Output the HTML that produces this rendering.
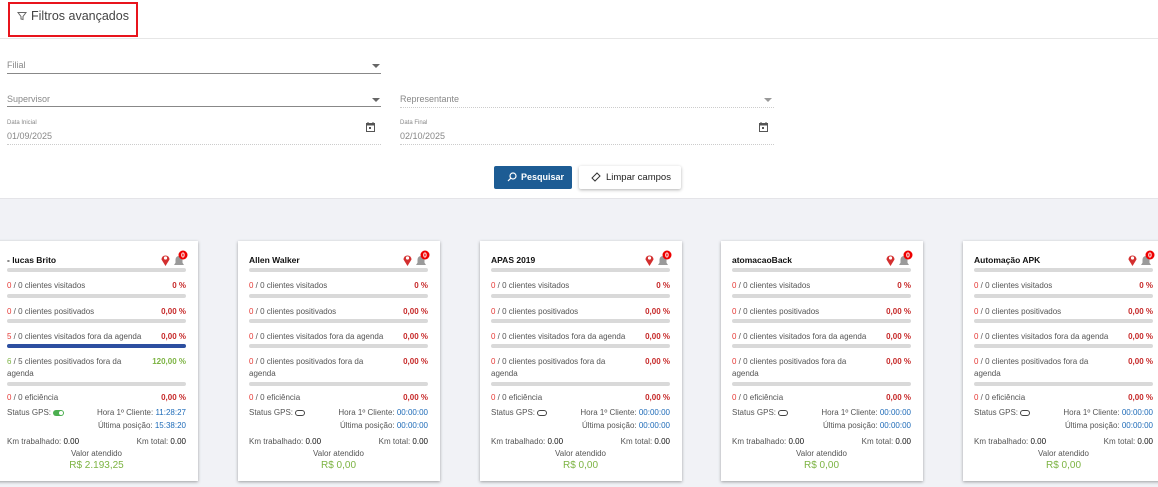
<!DOCTYPE html>
<html><head><meta charset="utf-8"><style>
*{margin:0;padding:0;box-sizing:border-box}
body{width:1158px;height:487px;overflow:hidden;background:#fff;font-family:"Liberation Sans",sans-serif;position:relative;color:#555}
.a{position:absolute}
.hdr{left:8px;top:2px;width:130px;height:35px;border:2px solid #e8141c}
.hline{left:0;top:38px;width:1158px;height:1px;background:#e6e6e6}
.lbl{font-size:9px;color:#888}
.ul{height:1px;background:#888}
.dl{height:0;border-top:1px dotted #ccc}
.tri{width:0;height:0;border-left:4px solid transparent;border-right:4px solid transparent;border-top:4px solid #666}
.gray{left:0;top:198px;width:1158px;height:289px;background:#f1f2f6;border-top:1px solid #e4e4e8}
.card{position:absolute;top:241px;width:202px;height:240px;background:#fff;box-shadow:0 1px 3px rgba(0,0,0,.35);font-size:8px;color:#555}
.card .t{position:absolute;left:11px;top:14px;font-weight:bold;font-size:8.5px;color:#111}
.bar{position:absolute;left:11px;width:179px;height:4px;background:#d9d9d9;border-radius:2px}
.r{position:absolute;left:11px;width:179px}
.r .p{position:absolute;right:0;top:0;color:#c62828;font-weight:bold}
.red{color:#e53935}.grn{color:#7cb342}.blu{color:#1e6bb8}
.ic{position:absolute;left:164px;top:9px}
</style></head><body>
<div class="a hdr"></div>
<svg class="a" style="left:17px;top:11px" width="10" height="10" viewBox="0 0 10 10"><path d="M1 1.5h8L6 5.5v3L4 8V5.5z" fill="none" stroke="#666" stroke-width="1"/></svg>
<div class="a" style="left:31px;top:9px;font-size:12.5px;color:#444">Filtros avançados</div>
<div class="a hline"></div>

<div class="a lbl" style="left:7px;top:60px">Filial</div>
<div class="a tri" style="left:372px;top:64px"></div>
<div class="a ul" style="left:7px;top:73px;width:374px"></div>

<div class="a lbl" style="left:7px;top:94px">Supervisor</div>
<div class="a tri" style="left:372px;top:98px"></div>
<div class="a ul" style="left:7px;top:106px;width:374px"></div>

<div class="a lbl" style="left:400px;top:94px">Representante</div>
<div class="a tri" style="left:764px;top:98px;border-top-color:#999"></div>
<div class="a dl" style="left:400px;top:107px;width:374px"></div>

<div class="a" style="left:7px;top:120px;font-size:6px;color:#888">Data Inicial</div>
<div class="a lbl" style="left:7px;top:131px">01/09/2025</div>
<div class="a dl" style="left:7px;top:144px;width:374px"></div>
<div class="a" style="left:400px;top:120px;font-size:6px;color:#888">Data Final</div>
<div class="a lbl" style="left:400px;top:131px">02/10/2025</div>
<div class="a dl" style="left:400px;top:144px;width:374px"></div>
<svg class="a" style="left:366px;top:122px" width="9" height="10" viewBox="0 0 9 10"><rect x="0.5" y="1.5" width="8" height="8" fill="none" stroke="#555"/><rect x="0.5" y="1.5" width="8" height="2" fill="#555"/><rect x="3" y="5" width="2" height="2" fill="#555"/><path d="M2 0v2M7 0v2" stroke="#555"/></svg>
<svg class="a" style="left:759px;top:122px" width="9" height="10" viewBox="0 0 9 10"><rect x="0.5" y="1.5" width="8" height="8" fill="none" stroke="#555"/><rect x="0.5" y="1.5" width="8" height="2" fill="#555"/><rect x="3" y="5" width="2" height="2" fill="#555"/><path d="M2 0v2M7 0v2" stroke="#555"/></svg>

<div class="a" style="left:494px;top:166px;width:78px;height:23px;background:#1d5c94;border-radius:2px;color:#fff;font-size:9px;font-weight:bold;line-height:23px;padding-left:27px">Pesquisar</div>
<svg class="a" style="left:507px;top:172px" width="10" height="10" viewBox="0 0 10 10"><circle cx="6" cy="4" r="3" fill="none" stroke="#fff" stroke-width="1.2"/><path d="M4 6L1 9" stroke="#fff" stroke-width="1.2"/></svg>
<div class="a" style="left:579px;top:166px;width:102px;height:23px;background:#fff;border-radius:2px;box-shadow:0 1px 3px rgba(0,0,0,.3);color:#222;font-size:9.5px;line-height:23px;padding-left:27px">Limpar campos</div>
<svg class="a" style="left:591px;top:172px" width="10" height="10" viewBox="0 0 10 10"><path d="M6 1L9 4 4 9 1 6z" fill="none" stroke="#333"/></svg>

<div class="a gray"></div>

<div class="card" style="left:-4px">
<div class="t">- lucas Brito</div>
<svg class="ic" width="28" height="18" viewBox="0 0 28 18"><path d="M5.5 16L1.5 9.5A4 4 0 1 1 9.5 9.5z" fill="#d32f2f"/><circle cx="5.5" cy="8" r="1.6" fill="#fff"/><path d="M14 15h10l-1.5-2.2V9.5a3.5 3.5 0 0 0-7 0v3.3z" fill="#9a9a9a"/><circle cx="23" cy="5" r="4.5" fill="#e00"/><text x="23" y="7.3" font-size="7" fill="#fff" text-anchor="middle" font-weight="bold" font-family="Liberation Sans">0</text></svg>
<div class="bar" style="top:27px"></div>
<div class="r" style="top:40px"><span class="red">0</span> / 0 clientes visitados<span class="p">0 %</span></div>
<div class="bar" style="top:53px"></div>
<div class="r" style="top:66px"><span class="red">0</span> / 0 clientes positivados<span class="p">0,00 %</span></div>
<div class="bar" style="top:78px"></div>
<div class="r" style="top:91px"><span class="red">5</span> / 0 clientes visitados fora da agenda<span class="p">0,00 %</span></div>
<div class="bar" style="top:103px;background:#2d4fa0"></div>
<div class="r" style="top:115px;line-height:12px"><span class="grn">6</span> / 5 clientes positivados fora da<br>agenda<span class="p" style="color:#7cb342">120,00 %</span></div>
<div class="bar" style="top:141px"></div>
<div class="r" style="top:152px"><span class="red">0</span> / 0 eficiência<span class="p">0,00 %</span></div>
<div class="r" style="top:167px">Status GPS: <span style="display:inline-block;width:11px;height:6px;background:#4caf50;border-radius:3px;vertical-align:middle;position:relative"><span style="position:absolute;right:1px;top:1px;width:4px;height:4px;background:#fff;border-radius:2px"></span></span><span style="position:absolute;right:0">Hora 1º Cliente: <span class="blu">11:28:27</span></span></div>
<div class="r" style="top:180px"><span style="position:absolute;right:0">Última posição: <span class="blu">15:38:20</span></span></div>
<div class="r" style="top:196px">Km trabalhado: <span style="color:#111">0.00</span><span style="position:absolute;right:0">Km total: <span style="color:#111">0.00</span></span></div>
<div class="r" style="top:208px;text-align:center">Valor atendido</div>
<div class="r" style="top:219px;text-align:center;font-size:10px"><span class="grn">R$ 2.193,25</span></div>
</div>

<div class="card" style="left:238px">
<div class="t">Allen Walker</div>
<svg class="ic" width="28" height="18" viewBox="0 0 28 18"><path d="M5.5 16L1.5 9.5A4 4 0 1 1 9.5 9.5z" fill="#d32f2f"/><circle cx="5.5" cy="8" r="1.6" fill="#fff"/><path d="M14 15h10l-1.5-2.2V9.5a3.5 3.5 0 0 0-7 0v3.3z" fill="#9a9a9a"/><circle cx="23" cy="5" r="4.5" fill="#e00"/><text x="23" y="7.3" font-size="7" fill="#fff" text-anchor="middle" font-weight="bold" font-family="Liberation Sans">0</text></svg>
<div class="bar" style="top:27px"></div>
<div class="r" style="top:40px"><span class="red">0</span> / 0 clientes visitados<span class="p">0 %</span></div>
<div class="bar" style="top:53px"></div>
<div class="r" style="top:66px"><span class="red">0</span> / 0 clientes positivados<span class="p">0,00 %</span></div>
<div class="bar" style="top:78px"></div>
<div class="r" style="top:91px"><span class="red">0</span> / 0 clientes visitados fora da agenda<span class="p">0,00 %</span></div>
<div class="bar" style="top:103px"></div>
<div class="r" style="top:115px;line-height:12px"><span class="red">0</span> / 0 clientes positivados fora da<br>agenda<span class="p">0,00 %</span></div>
<div class="bar" style="top:141px"></div>
<div class="r" style="top:152px"><span class="red">0</span> / 0 eficiência<span class="p">0,00 %</span></div>
<div class="r" style="top:167px">Status GPS: <span style="display:inline-block;width:10px;height:6px;border:1px solid #444;border-radius:3px;vertical-align:middle"></span><span style="position:absolute;right:0">Hora 1º Cliente: <span class="blu">00:00:00</span></span></div>
<div class="r" style="top:180px"><span style="position:absolute;right:0">Última posição: <span class="blu">00:00:00</span></span></div>
<div class="r" style="top:196px">Km trabalhado: <span style="color:#111">0.00</span><span style="position:absolute;right:0">Km total: <span style="color:#111">0.00</span></span></div>
<div class="r" style="top:208px;text-align:center">Valor atendido</div>
<div class="r" style="top:219px;text-align:center;font-size:10px"><span class="grn">R$ 0,00</span></div>
</div>

<div class="card" style="left:480px">
<div class="t">APAS 2019</div>
<svg class="ic" width="28" height="18" viewBox="0 0 28 18"><path d="M5.5 16L1.5 9.5A4 4 0 1 1 9.5 9.5z" fill="#d32f2f"/><circle cx="5.5" cy="8" r="1.6" fill="#fff"/><path d="M14 15h10l-1.5-2.2V9.5a3.5 3.5 0 0 0-7 0v3.3z" fill="#9a9a9a"/><circle cx="23" cy="5" r="4.5" fill="#e00"/><text x="23" y="7.3" font-size="7" fill="#fff" text-anchor="middle" font-weight="bold" font-family="Liberation Sans">0</text></svg>
<div class="bar" style="top:27px"></div>
<div class="r" style="top:40px"><span class="red">0</span> / 0 clientes visitados<span class="p">0 %</span></div>
<div class="bar" style="top:53px"></div>
<div class="r" style="top:66px"><span class="red">0</span> / 0 clientes positivados<span class="p">0,00 %</span></div>
<div class="bar" style="top:78px"></div>
<div class="r" style="top:91px"><span class="red">0</span> / 0 clientes visitados fora da agenda<span class="p">0,00 %</span></div>
<div class="bar" style="top:103px"></div>
<div class="r" style="top:115px;line-height:12px"><span class="red">0</span> / 0 clientes positivados fora da<br>agenda<span class="p">0,00 %</span></div>
<div class="bar" style="top:141px"></div>
<div class="r" style="top:152px"><span class="red">0</span> / 0 eficiência<span class="p">0,00 %</span></div>
<div class="r" style="top:167px">Status GPS: <span style="display:inline-block;width:10px;height:6px;border:1px solid #444;border-radius:3px;vertical-align:middle"></span><span style="position:absolute;right:0">Hora 1º Cliente: <span class="blu">00:00:00</span></span></div>
<div class="r" style="top:180px"><span style="position:absolute;right:0">Última posição: <span class="blu">00:00:00</span></span></div>
<div class="r" style="top:196px">Km trabalhado: <span style="color:#111">0.00</span><span style="position:absolute;right:0">Km total: <span style="color:#111">0.00</span></span></div>
<div class="r" style="top:208px;text-align:center">Valor atendido</div>
<div class="r" style="top:219px;text-align:center;font-size:10px"><span class="grn">R$ 0,00</span></div>
</div>

<div class="card" style="left:721px">
<div class="t">atomacaoBack</div>
<svg class="ic" width="28" height="18" viewBox="0 0 28 18"><path d="M5.5 16L1.5 9.5A4 4 0 1 1 9.5 9.5z" fill="#d32f2f"/><circle cx="5.5" cy="8" r="1.6" fill="#fff"/><path d="M14 15h10l-1.5-2.2V9.5a3.5 3.5 0 0 0-7 0v3.3z" fill="#9a9a9a"/><circle cx="23" cy="5" r="4.5" fill="#e00"/><text x="23" y="7.3" font-size="7" fill="#fff" text-anchor="middle" font-weight="bold" font-family="Liberation Sans">0</text></svg>
<div class="bar" style="top:27px"></div>
<div class="r" style="top:40px"><span class="red">0</span> / 0 clientes visitados<span class="p">0 %</span></div>
<div class="bar" style="top:53px"></div>
<div class="r" style="top:66px"><span class="red">0</span> / 0 clientes positivados<span class="p">0,00 %</span></div>
<div class="bar" style="top:78px"></div>
<div class="r" style="top:91px"><span class="red">0</span> / 0 clientes visitados fora da agenda<span class="p">0,00 %</span></div>
<div class="bar" style="top:103px"></div>
<div class="r" style="top:115px;line-height:12px"><span class="red">0</span> / 0 clientes positivados fora da<br>agenda<span class="p">0,00 %</span></div>
<div class="bar" style="top:141px"></div>
<div class="r" style="top:152px"><span class="red">0</span> / 0 eficiência<span class="p">0,00 %</span></div>
<div class="r" style="top:167px">Status GPS: <span style="display:inline-block;width:10px;height:6px;border:1px solid #444;border-radius:3px;vertical-align:middle"></span><span style="position:absolute;right:0">Hora 1º Cliente: <span class="blu">00:00:00</span></span></div>
<div class="r" style="top:180px"><span style="position:absolute;right:0">Última posição: <span class="blu">00:00:00</span></span></div>
<div class="r" style="top:196px">Km trabalhado: <span style="color:#111">0.00</span><span style="position:absolute;right:0">Km total: <span style="color:#111">0.00</span></span></div>
<div class="r" style="top:208px;text-align:center">Valor atendido</div>
<div class="r" style="top:219px;text-align:center;font-size:10px"><span class="grn">R$ 0,00</span></div>
</div>

<div class="card" style="left:963px">
<div class="t">Automação APK</div>
<svg class="ic" width="28" height="18" viewBox="0 0 28 18"><path d="M5.5 16L1.5 9.5A4 4 0 1 1 9.5 9.5z" fill="#d32f2f"/><circle cx="5.5" cy="8" r="1.6" fill="#fff"/><path d="M14 15h10l-1.5-2.2V9.5a3.5 3.5 0 0 0-7 0v3.3z" fill="#9a9a9a"/><circle cx="23" cy="5" r="4.5" fill="#e00"/><text x="23" y="7.3" font-size="7" fill="#fff" text-anchor="middle" font-weight="bold" font-family="Liberation Sans">0</text></svg>
<div class="bar" style="top:27px"></div>
<div class="r" style="top:40px"><span class="red">0</span> / 0 clientes visitados<span class="p">0 %</span></div>
<div class="bar" style="top:53px"></div>
<div class="r" style="top:66px"><span class="red">0</span> / 0 clientes positivados<span class="p">0,00 %</span></div>
<div class="bar" style="top:78px"></div>
<div class="r" style="top:91px"><span class="red">0</span> / 0 clientes visitados fora da agenda<span class="p">0,00 %</span></div>
<div class="bar" style="top:103px"></div>
<div class="r" style="top:115px;line-height:12px"><span class="red">0</span> / 0 clientes positivados fora da<br>agenda<span class="p">0,00 %</span></div>
<div class="bar" style="top:141px"></div>
<div class="r" style="top:152px"><span class="red">0</span> / 0 eficiência<span class="p">0,00 %</span></div>
<div class="r" style="top:167px">Status GPS: <span style="display:inline-block;width:10px;height:6px;border:1px solid #444;border-radius:3px;vertical-align:middle"></span><span style="position:absolute;right:0">Hora 1º Cliente: <span class="blu">00:00:00</span></span></div>
<div class="r" style="top:180px"><span style="position:absolute;right:0">Última posição: <span class="blu">00:00:00</span></span></div>
<div class="r" style="top:196px">Km trabalhado: <span style="color:#111">0.00</span><span style="position:absolute;right:0">Km total: <span style="color:#111">0.00</span></span></div>
<div class="r" style="top:208px;text-align:center">Valor atendido</div>
<div class="r" style="top:219px;text-align:center;font-size:10px"><span class="grn">R$ 0,00</span></div>
</div>
</body></html>
